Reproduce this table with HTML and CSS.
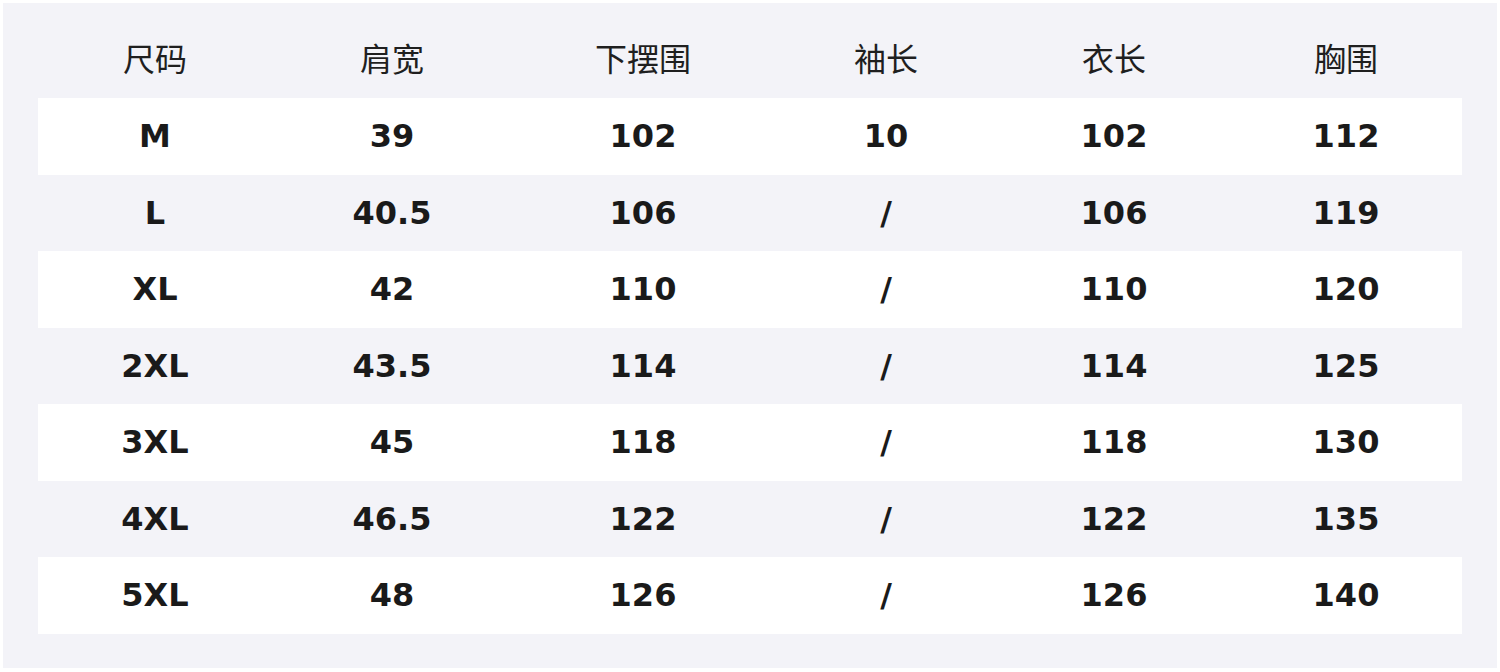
FILE: index.html
```html
<!DOCTYPE html>
<html lang="zh">
<head>
<meta charset="utf-8">
<link rel="stylesheet" href="styles.css">
</head>
<body>
<div class="panel">
  <div class="table">
    <div class="row head"><div>尺码</div><div>肩宽</div><div>下摆围</div><div>袖长</div><div>衣长</div><div>胸围</div></div>
    <div class="row odd"><div>M</div><div>39</div><div>102</div><div>10</div><div>102</div><div>112</div></div>
    <div class="row"><div>L</div><div>40.5</div><div>106</div><div>/</div><div>106</div><div>119</div></div>
    <div class="row odd"><div>XL</div><div>42</div><div>110</div><div>/</div><div>110</div><div>120</div></div>
    <div class="row"><div>2XL</div><div>43.5</div><div>114</div><div>/</div><div>114</div><div>125</div></div>
    <div class="row odd"><div>3XL</div><div>45</div><div>118</div><div>/</div><div>118</div><div>130</div></div>
    <div class="row"><div>4XL</div><div>46.5</div><div>122</div><div>/</div><div>122</div><div>135</div></div>
    <div class="row odd"><div>5XL</div><div>48</div><div>126</div><div>/</div><div>126</div><div>140</div></div>
  </div>
</div>
</body>
</html>
```
FILE: styles.css
```css
html, body {
  margin: 0;
  padding: 0;
  background: #ffffff;
}
.panel {
  margin: 3px;
  width: 1494px;
  height: 665px;
  box-sizing: border-box;
  background: #f3f3f8;
  padding: 0 35px 36px;
}
.table {
  display: flex;
  flex-direction: column;
}
.row {
  display: grid;
  grid-template-columns: 234px 240px 262px 224px 232px 232px;
  height: 76.5px;
  align-items: center;
  text-align: center;
  font-family: "DejaVu Sans", "Noto Sans CJK SC", sans-serif;
  font-weight: bold;
  font-size: 32px;
  color: #1a1a1a;
}
.row.odd {
  background: #ffffff;
}
.row.head {
  height: 95px;
  padding-top: 13px;
  box-sizing: border-box;
  align-items: center;
  font-family: "Noto Sans CJK SC", sans-serif;
  font-weight: normal;
  font-size: 32px;
  color: #1f1f1f;
}
```
